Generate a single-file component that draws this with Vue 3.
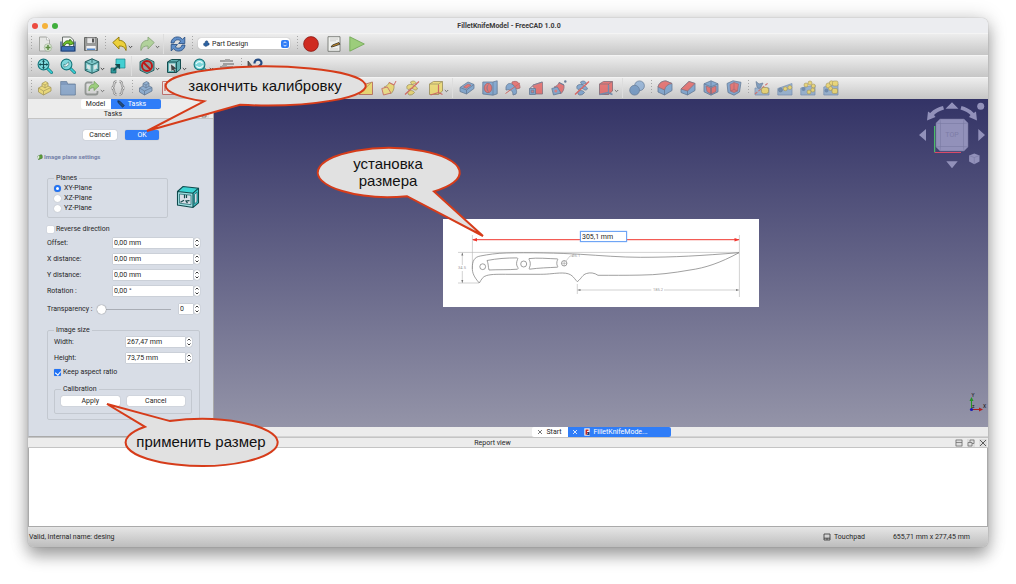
<script setup>
import { ref } from 'vue'

const fileTools = [
  { k: 'handle' }, { k: 'b', i: 'new', t: 'New' }, { k: 'b', i: 'open', t: 'Open' }, { k: 'b', i: 'save', t: 'Save' },
  { k: 'handle' }, { k: 'b', i: 'undo', t: 'Undo', m: true }, { k: 'b', i: 'redo', t: 'Redo', m: true, dim: true },
  { k: 'sep' }, { k: 'b', i: 'refresh', t: 'Refresh' }, { k: 'handle' }, { k: 'combo' }, { k: 'handle' },
  { k: 'b', i: 'record', t: 'Record macro' }, { k: 'b', i: 'macro', t: 'Macros' }, { k: 'b', i: 'play', t: 'Run macro' }
]
const viewTools = [
  { k: 'handle' }, { k: 'b', i: 'fit', t: 'Fit all' }, { k: 'b', i: 'fitsel', t: 'Fit selection' },
  { k: 'b', i: 'iso', t: 'Isometric', m: true }, { k: 'b', i: 'golink', t: 'Go to linked object' }, { k: 'sep' },
  { k: 'b', i: 'nodraw', t: 'Draw style', m: true }, { k: 'b', i: 'selbox', t: 'Bounding box', m: true },
  { k: 'b', i: 'lens', t: 'Zoom', m: true }, { k: 'b', i: 'measure', t: 'Measure', dim: true },
  { k: 'handle' }, { k: 'b', i: 'whats', t: "What's this?" }
]
const partTools = [
  { k: 'handle' }, { k: 'b', i: 'ybody', t: 'Part' }, { k: 'b', i: 'folder', t: 'Group' },
  { k: 'b', i: 'share', t: 'Link', m: true }, { k: 'b', i: 'braces', t: 'Variables' }, { k: 'handle' },
  { k: 'b', i: 'bbody', t: 'Body' }, { k: 'b', i: 'sketch', t: 'Sketch' }, { k: 'space' },
  { k: 'b', i: 'yloft', t: 'Loft' }, { k: 'b', i: 'ysweep', t: 'Pipe' }, { k: 'b', i: 'yhelix', t: 'Helix' },
  { k: 'b', i: 'ycube', t: 'Primitive', m: true }, { k: 'sep' },
  { k: 'b', i: 'pocket', t: 'Pocket' }, { k: 'b', i: 'hole', t: 'Hole' }, { k: 'b', i: 'groove', t: 'Groove' },
  { k: 'b', i: 'rloft', t: 'Subtractive loft' }, { k: 'b', i: 'rsweep', t: 'Subtractive pipe' },
  { k: 'b', i: 'rhelix', t: 'Subtractive helix' }, { k: 'b', i: 'rcube', t: 'Subtractive primitive', m: true },
  { k: 'sep' }, { k: 'b', i: 'boolean', t: 'Boolean' }, { k: 'handle' },
  { k: 'b', i: 'fillet', t: 'Fillet' }, { k: 'b', i: 'chamfer', t: 'Chamfer' }, { k: 'b', i: 'draft', t: 'Draft' },
  { k: 'b', i: 'thick', t: 'Thickness' }, { k: 'handle' },
  { k: 'b', i: 'mirror', t: 'Mirrored' }, { k: 'b', i: 'linear', t: 'Linear pattern' },
  { k: 'b', i: 'polar', t: 'Polar pattern' }, { k: 'b', i: 'multi', t: 'MultiTransform' }
]
const bars = [
  { name: 'File', items: fileTools },
  { name: 'View', items: viewTools },
  { name: 'Part Design', items: partTools, faded: true }
]

const planes = ['XY-Plane', 'XZ-Plane', 'YZ-Plane']
const plane = ref('XY-Plane')
const reverse = ref(false)
const keep = ref(true)
const transparency = ref(0)
const placement = ref([
  { id: 'offset', label: 'Offset:', value: '0,00 mm' },
  { id: 'xdist', label: 'X distance:', value: '0,00 mm' },
  { id: 'ydist', label: 'Y distance:', value: '0,00 mm' },
  { id: 'rotation', label: 'Rotation :', value: '0,00 °' }
])
const sizes = ref([
  { id: 'width', label: 'Width:', value: '267,47 mm' },
  { id: 'height', label: 'Height:', value: '73,75 mm' }
])
const measured = ref('305,1 mm')
</script>

<template>
  <div class="desktop">
    <svg class="defs" aria-hidden="true">
      <defs>
        <symbol id="new" viewBox="0 0 16 16"><path d="M2.5 1h7l3 3v11h-10z" fill="#e6e7e5" stroke="#a4a6a2" /><path d="M9.5 1v3h3" fill="#fff" stroke="#a4a6a2" stroke-width=".6" /><circle cx="11" cy="11.500" r="3.800" fill="#d9e6d2" stroke="#9bac92" stroke-width=".6" /><path d="M11 9v5M8.500 11.500h5" stroke="#5d8d43" stroke-width="1.500" /></symbol>
        <symbol id="open" viewBox="0 0 16 16"><path d="M2.500 1h8l3 3v8h-11z" fill="#f4f5f3" stroke="#49504c" stroke-width=".8" /><path d="M1 5.500v9.500h14V5.500" fill="none" stroke="#244a84" stroke-width="1.200" /><path d="M1.500 10.500h13v4.500h-13z" fill="#3c6eb4" stroke="#1d3e72" stroke-width=".8" /><path d="M3 9.500c.5-4 4-5.500 6.500-4.500l.4-1.800 4 4.300-4.800 1.800.2-1.800c-2-.6-4 .2-4.500 2z" fill="#70c22a" stroke="#24600b" stroke-width=".8" /></symbol>
        <symbol id="save" viewBox="0 0 16 16"><path d="M1.500 1.500h12l1 1v12h-13z" fill="#999b99" stroke="#676967" /><path d="M4 1.800h8v5.700H4z" fill="#e7e7e7" stroke="#777" stroke-width=".5" /><path d="M9 2.500h2v4H9z" fill="#555" /><path d="M3 9.500h10v5H3z" fill="#f1f1f1" stroke="#777" stroke-width=".5" /><path d="M4 12.500h8v1.500H4z" fill="#5086ca" /></symbol>
        <symbol id="undo" viewBox="0 0 16 16"><path d="M.8 6.500 7 1v3.300c5 0 8 3.700 7 10.200-1-3.200-3.300-4.700-7-4.500v3z" fill="#ecd03b" stroke="#8b7507" stroke-width=".9" stroke-linejoin="round" /></symbol>
        <symbol id="redo" viewBox="0 0 16 16"><path d="M15.200 6.500 9 1v3.300c-5 0-8 3.700-7 10.200 1-3.200 3.300-4.700 7-4.500v3z" fill="#a7d08c" stroke="#789b65" stroke-width=".9" stroke-linejoin="round" /></symbol>
        <symbol id="refresh" viewBox="0 0 16 16"><path d="M1 7c.3-6.500 8.500-8 11.500-3.600L14.800 1v6.500H8.600L10.700 5C8 2.700 4.500 4 4 7z" fill="#608fc9" stroke="#234a7d" stroke-width=".8" /><path d="M15 9c-.3 6.500-8.500 8-11.500 3.600L1.200 15V8.500h6.200L5.300 11c2.700 2.300 6.200 1 6.700-2z" fill="#608fc9" stroke="#234a7d" stroke-width=".8" /></symbol>
        <symbol id="record" viewBox="0 0 16 16"><circle cx="8" cy="8" r="7.400" fill="#cf2b20" stroke="#811611" stroke-width=".7" /></symbol>
        <symbol id="macro" viewBox="0 0 16 16"><path d="M2 .7h12v14.600H2z" fill="#eff0ed" stroke="#676a65" stroke-width=".8" /><path d="M4 3h8M4 4.800h6M4 13h8" stroke="#b9bbb8" stroke-width=".6" /><path d="m5 11 1.500-2L13 6.500l.8 1.800L7 10.700z" fill="#c58c2a" stroke="#2e2c27" stroke-width=".8" /></symbol>
        <symbol id="play" viewBox="0 0 16 16"><path d="M.8.8 15.300 8 .8 15.200z" fill="#9ccd7b" stroke="#6fa553" stroke-width=".8" /></symbol>

        <symbol id="glass" viewBox="0 0 16 16"><path d="m10 10 4.500 4.500" stroke="#16777c" stroke-width="3" stroke-linecap="round" /><path d="m10 10 4.500 4.500" stroke="#38d3d8" stroke-width="1.700" stroke-linecap="round" /><circle cx="6.500" cy="6.500" r="5.400" fill="#7dd6da" stroke="#16777c" stroke-width="1.100" /></symbol>
        <symbol id="fit" viewBox="0 0 16 16"><use href="#glass" /><path d="M6.500 2.500v8M2.500 6.500h8" stroke="#174f54" stroke-width="1.100" /><path d="m6.500 1.700 1.500 2H5zM6.500 11.300l1.500-2H5zM1.700 6.500l2 1.500V5zM11.300 6.500l-2 1.500V5z" fill="#174f54" /></symbol>
        <symbol id="fitsel" viewBox="0 0 16 16"><use href="#glass" /><path d="M4 9V6l1.200 1L8.500 4 9 6.500 6.500 8.500z" fill="#e7f7f7" stroke="#235a5e" stroke-width=".5" /></symbol>
        <symbol id="iso" viewBox="0 0 16 16"><path d="m8 .8 6.800 3v8.600L8 15.300l-6.800-2.900V3.800z" fill="#7fc9cb" stroke="#1f5c5e" stroke-width="1" /><path d="m1.200 3.800 6.800 3 6.800-3M8 6.800v8.500M8 .8v4M1.200 12.400 6 9.500m8.800 2.900L10 9.500" fill="none" stroke="#1f5c5e" stroke-width=".8" /><path d="M3 6.200 6.300 7.800v4L3 10.500zM13 6.200 9.700 7.800v4l3.300-1.300z" fill="#d9e5e5" /></symbol>
        <symbol id="golink" viewBox="0 0 16 16"><path d="M6 1h9v9H6z" fill="#44cfd2" stroke="#188386" stroke-width=".7" /><path d="M1 10h5v5H1z" fill="#2c9699" stroke="#14585a" stroke-width=".7" /><path d="m3.500 12.500 5-5M6.200 6.500h3.300v3.300z" fill="#16484a" stroke="#16484a" stroke-width="1.200" /></symbol>
        <symbol id="nodraw" viewBox="0 0 16 16"><path d="m8 .5 7 3.200v8.600l-7 3.200-7-3.200V3.700z" fill="#5fb0b2" stroke="#154d4f" stroke-width=".8" /><circle cx="8" cy="8" r="5" fill="#8d9a97" stroke="#c01818" stroke-width="2" /><path d="m4.500 4.500 7 7" stroke="#c01818" stroke-width="2" /></symbol>
        <symbol id="selbox" viewBox="0 0 16 16"><path d="m1.500 4 4-2.500h9v9.500l-4 3.500h-9z" fill="#5fb0b2" stroke="#154d4f" stroke-width="1" /><path d="M1.500 4h9v10.500M10.500 4l4-2.500" fill="none" stroke="#154d4f" stroke-width=".9" /><path d="M3 5.500h6V13H3z" fill="#cfdfdf" /><path d="m5 6.500 5.500 4-2.200.6 1.200 2.400-1.200.6-1.200-2.400L5.500 13z" fill="#444" /></symbol>
        <symbol id="lens" viewBox="0 0 16 16"><use href="#glass" /><path d="M3 6c1.500-3 5-3 6.500-.7M10 7.500c-1.500 2.800-5 2.800-6.500.5" fill="none" stroke="#eefbfb" stroke-width="1.300" /></symbol>
        <symbol id="measure" viewBox="0 0 16 16"><path d="M1 3h13M4 6h11M1 9h13" stroke="#777" stroke-width="1.500" /><path d="M6 1h5v3H6zM3 7h5v3H3z" fill="#999" /></symbol>
        <symbol id="whats" viewBox="0 0 16 16"><path d="M1 3v11l8-1z" fill="#656565" stroke="#333" stroke-width=".7" /><path d="M7.500 5.500c0-5 7-5 7-.5 0 3-3.500 2-3.500 5" fill="none" stroke="#254c84" stroke-width="2.200" /></symbol>

        <symbol id="ybody" viewBox="0 0 16 16"><path d="m1.500 8 3.500-2V3.500L8.500 1.500 11 3v3l3 1.500v3.500L6.500 15l-5-3z" fill="#f2d951" stroke="#8b7922" stroke-width=".8" /><path d="m1.500 8 5 3v4M6.500 11 14 7.500M5 6l3 2 3-2M5 3.500 8 5v3M8 5l3-2" fill="none" stroke="#8b7922" stroke-width=".7" /></symbol>
        <symbol id="bbody" viewBox="0 0 16 16"><path d="m1.500 8 3.500-2V3.500L8.500 1.500 11 3v3l3 1.500v3.500L6.500 15l-5-3z" fill="#6d9acb" stroke="#2c4b70" stroke-width=".8" /><path d="m1.500 8 5 3v4M6.500 11 14 7.500M5 6l3 2 3-2M5 3.500 8 5v3M8 5l3-2" fill="none" stroke="#2c4b70" stroke-width=".7" /></symbol>
        <symbol id="folder" viewBox="0 0 16 16"><path d="M.7 1.500h6l1 2.500h7.600v11H.7z" fill="#5379ad" stroke="#34557f" stroke-width=".8" /><path d="M1.200 5h13.600v9.500H1.200z" fill="#6d94c4" /></symbol>
        <symbol id="share" viewBox="0 0 16 16"><path d="M8.500 2.500h-5a2 2 0 0 0-2 2v8a2 2 0 0 0 2 2h8a2 2 0 0 0 2-2v-1.500" fill="none" stroke="#747a76" stroke-width="1.800" /><path d="M5 11c-.5-5 2-7 5-6.800V1.300L15 6l-5 4.500V7.800c-2.500-.3-4.300.7-5 3.200z" fill="#7dc650" stroke="#417a1f" stroke-width=".7" /></symbol>
        <symbol id="braces" viewBox="0 0 16 16"><path d="M6.500 1.500C2 1.500 6 7 1.800 8 6 9 2 14.500 6.500 14.500M9.500 1.500c4.500 0 .5 5.500 4.700 6.500-4.200 1-.2 6.500-4.700 6.500" fill="none" stroke="#606060" stroke-width="2.400" /><path d="M6.500 1.500C2 1.500 6 7 1.800 8 6 9 2 14.500 6.500 14.500M9.500 1.500c4.500 0 .5 5.500 4.700 6.500-4.200 1-.2 6.500-4.700 6.500" fill="none" stroke="#f0f0f0" stroke-width="1" /></symbol>
        <symbol id="sketch" viewBox="0 0 16 16"><path d="M1.500 1.500h13v13h-13z" fill="#f1e8e5" stroke="#b24440" /><path d="M4 11V4h6" fill="none" stroke="#c3322d" stroke-width="1.300" /></symbol>
        <symbol id="yloft" viewBox="0 0 16 16"><path d="M1 6l13.500-4v12.500H1z" fill="#efd445" stroke="#ad4b32" /><path d="m1 14 13-12" stroke="#a88a1d" /></symbol>
        <symbol id="ysweep" viewBox="0 0 16 16"><path d="M3 7c3-1 4-2 5-4.500L13 5c.5 4-1 7-3.500 9z" fill="#edd34a" stroke="#85742c" stroke-width=".8" /><path d="m.8 8.500 5.500-1.500L10 13l-7.500 2z" fill="#f0dc66" stroke="#c04c3b" stroke-width="1" /><path d="m8 2.500 5 2.500 2-4" fill="none" stroke="#c93731" stroke-width="1" /></symbol>
        <symbol id="yhelix" viewBox="0 0 16 16"><g fill="#e9d14d" stroke="#85752b" stroke-width=".8"><path d="M6.500 2c3-2 6-.5 6 2.500-1-1-3.500-1-4.500.5z" /><path d="M3 6c2-3 9-1.500 10.500 3-1 1-2 1.200-3 1C9.500 8 6 8 5 9.500 3 9.500 2.500 8 3 6z" /><path d="M3.500 12c2-2.500 6-1.500 7 .5-1.500 2.500-5 3-6 2z" /></g><path d="M1 14.500 15 1.500" stroke="#cc3530" stroke-width="1.100" /></symbol>
        <symbol id="ycube" viewBox="0 0 16 16"><path d="m1.500 4 4-2.500h9V11L10.500 14.500h-9z" fill="#f0d84f" stroke="#85742c" stroke-width=".9" /><path d="M1.500 4h9v10.500M10.500 4l4-2.500" fill="none" stroke="#85742c" stroke-width=".8" /><path d="M10.500 5v7.500l4 2M10.500 12.500l-8 2.500" fill="none" stroke="#c93731" stroke-width="1.200" /></symbol>
        <symbol id="pocket" viewBox="0 0 16 16"><path d="m1 7.500 8-5.500 6 2.500v4L7.500 14 1 11.500z" fill="#5d90c8" stroke="#304f76" stroke-width=".8" /><path d="M1 7.500 7.500 10 15 4.500M7.500 10v4" fill="none" stroke="#304f76" stroke-width=".8" /><path d="m4.500 7 4.500-3 3 1.200L7.500 8.300z" fill="#e44847" stroke="#8b3032" stroke-width=".6" /></symbol>
        <symbol id="hole" viewBox="0 0 16 16"><path d="M.8 2h10l4.400-1.200v13L11 15.200.8 14z" fill="#5d90c8" stroke="#304f76" stroke-width=".8" /><path d="M11 2v13" stroke="#304f76" stroke-width=".7" /><ellipse cx="6" cy="8" rx="3.800" ry="4.700" fill="#e44847" stroke="#8b3032" stroke-width=".8" /><path d="M6.500 4.500c-2 2-2 5 0 7" stroke="#304f76" stroke-width=".8" fill="none" /></symbol>
        <symbol id="groove" viewBox="0 0 16 16"><path d="M7 2c5-2 8 1 8 6l-3.500 1C10 6 9 5 7 5z" fill="#e44847" stroke="#8b3032" stroke-width=".8" /><path d="M1 7c1-4 5-5 8-1s3 6 2 8l-3 1C8 11 6 9 1 10z" fill="#5d90c8" stroke="#304f76" stroke-width=".8" /><path d="M.5 13.500 15 3" stroke="#c93731" stroke-width="1" /></symbol>
        <symbol id="rloft" viewBox="0 0 16 16"><path d="M5 5 14.500 2v12L8 14z" fill="#e44847" stroke="#5e4358" stroke-width=".8" /><path d="M1.500 8.500h6v6h-6z" fill="#5d90c8" stroke="#304f76" stroke-width=".8" /><path d="m1.500 8.500 4-3.500L14 2M3.200 10.200h2.600v2.600H3.200z" fill="#cf5a5f" stroke="#304f76" stroke-width=".7" /></symbol>
        <symbol id="rsweep" viewBox="0 0 16 16"><path d="M3 7c3-1 4-2 5-4.500L13 5c.5 4-1 7-3.500 9z" fill="#e44847" stroke="#63435a" stroke-width=".8" /><path d="m.8 8.500 5.500-1.500L10 13l-7.500 2z" fill="#5d90c8" stroke="#304f76" stroke-width=".8" /><path d="m8 2.500 5 2.500" stroke="#304f76" /><circle cx="4.800" cy="11" r="1.500" fill="#d5585c" /><circle cx="14.300" cy="1.500" r="1.200" fill="#304f76" /></symbol>
        <symbol id="rhelix" viewBox="0 0 16 16"><g fill="#5d90c8" stroke="#304f76" stroke-width=".8"><path d="M6.500 2c3-2 6-.5 6 2.500-1-1-3.500-1-4.500.5z" /><path d="M3 6c2-3 9-1.500 10.500 3-1 1-2 1.200-3 1C9.500 8 6 8 5 9.500 3 9.500 2.500 8 3 6z" /><path d="M3.500 12c2-2.500 6-1.500 7 .5-1.500 2.500-5 3-6 2z" /></g><path d="M1 14.500 15 1.500" stroke="#d9302c" stroke-width="1.300" /></symbol>
        <symbol id="rcube" viewBox="0 0 16 16"><path d="m1.500 4 4-2.500h9V11L10.500 14.500h-9z" fill="#e44847" stroke="#65404f" stroke-width=".9" /><path d="M1.500 4h9v10.500M10.500 4l4-2.500" fill="none" stroke="#65404f" stroke-width=".8" /><path d="M10.500 5v8l4 1.500M10.500 12.500l-9 2" fill="none" stroke="#41699b" stroke-width="1.400" /></symbol>
        <symbol id="boolean" viewBox="0 0 16 16"><circle cx="10.500" cy="5.800" r="4.900" fill="#7ba3d1" stroke="#304f76" stroke-width=".7" /><circle cx="5.600" cy="10.200" r="4.900" fill="#4f80b9" stroke="#304f76" stroke-width=".7" /></symbol>
        <symbol id="fillet" viewBox="0 0 16 16"><path d="M1 7c1-4 4-6 8-6l6 2.500v7L7.500 15 1 12z" fill="#5d90c8" stroke="#304f76" stroke-width=".8" /><path d="M1 7c1-4 4-6 8-6l6 2.500C11 4 8.500 6 7.500 10z" fill="#e44847" stroke="#65404f" stroke-width=".8" /><path d="M7.500 10v5" stroke="#304f76" stroke-width=".8" /></symbol>
        <symbol id="chamfer" viewBox="0 0 16 16"><path d="M1 9 9 1.500l6 2v7L7.500 15 1 12.500z" fill="#5d90c8" stroke="#304f76" stroke-width=".8" /><path d="M1 9 9 1.500l6 2L7.500 11z" fill="#e44847" stroke="#65404f" stroke-width=".8" /><path d="M7.500 11v4" stroke="#304f76" stroke-width=".8" /></symbol>
        <symbol id="draft" viewBox="0 0 16 16"><path d="m8 .8 7 3v8L8 15.200l-7-3.400v-8z" fill="#5d90c8" stroke="#304f76" stroke-width=".8" /><path d="M3 6 8 8v6l-4-2.500zM13 6 8 8v6l5-2.500z" fill="#e44847" stroke="#7d3b48" stroke-width=".7" /><path d="m1 3.800 7 3 7-3M8 .8v14" fill="none" stroke="#304f76" stroke-width=".8" /></symbol>
        <symbol id="thick" viewBox="0 0 16 16"><path d="m1 3.500 6-2.700 8 1.500L13.500 12 8 15.200 2 12.500z" fill="#5d90c8" stroke="#304f76" stroke-width=".8" /><path d="M4 4.500 8 2.500l4.500 1.500-1 7L8 12.500 4.500 11z" fill="#e44847" stroke="#843745" stroke-width=".7" /><path d="M8 2.500v7l3.500 1.500M8 9.500 4.500 11" fill="none" stroke="#843745" stroke-width=".7" /></symbol>
        <symbol id="mirror" viewBox="0 0 16 16"><path d="M1 8h14v7H1z" fill="#88a7ca" stroke="#4a6f9d" stroke-width=".7" /><path d="m2 1.500 3 2.500 4-1-2 4-2 1.500L3 7z" fill="#5681b2" stroke="#304f76" stroke-width=".7" /><path d="m1 14 13-11" stroke="#cc4943" stroke-width="1.200" stroke-dasharray="3 1.500" /><rect x="7.500" y="7.500" width="7" height="6" rx="2" fill="#ebcf4a" stroke="#857229" stroke-width=".7" /></symbol>
        <symbol id="linear" viewBox="0 0 16 16"><path d="M.8 8.500 15 3.500V15H.8z" fill="#7b9fc8" stroke="#4a6f9d" stroke-width=".7" /><circle cx="3.500" cy="10" r="2" fill="#41699b" stroke="#304f76" stroke-width=".6" /><circle cx="8.300" cy="8.800" r="2" fill="#ebcf4a" stroke="#857229" stroke-width=".6" /><circle cx="12.800" cy="7.500" r="2" fill="#ebcf4a" stroke="#857229" stroke-width=".6" /></symbol>
        <symbol id="polar" viewBox="0 0 16 16"><path d="M.8 8 15 5v10H.8z" fill="#7b9fc8" stroke="#4a6f9d" stroke-width=".7" /><circle cx="3.500" cy="9" r="2" fill="#41699b" /><g fill="#ebcf4a" stroke="#857229" stroke-width=".6"><circle cx="6" cy="5" r="2" /><circle cx="10" cy="3" r="2" /><circle cx="13.300" cy="6" r="2" /><circle cx="12.800" cy="10" r="2" /><circle cx="9" cy="12" r="2" /></g></symbol>
        <symbol id="multi" viewBox="0 0 16 16"><path d="M.8 7 15 4v11H.8z" fill="#7b9fc8" stroke="#4a6f9d" stroke-width=".7" /><circle cx="3.500" cy="10.500" r="2" fill="#41699b" /><g fill="#ebcf4a" stroke="#857229" stroke-width=".6"><circle cx="5.500" cy="5.500" r="2.600" /><circle cx="8.500" cy="3" r="2.200" /><rect x="9.500" y="1" width="5.500" height="5" rx="1.500" /><circle cx="7.500" cy="8.500" r="2" /><rect x="9" y="8.500" width="5.500" height="5" rx="1.500" /></g></symbol>
      </defs>
    </svg>

    <div class="window">
      <header class="titlebar">
        <div class="lights">
          <button class="light red" aria-label="Close"></button>
          <button class="light amber" aria-label="Minimize"></button>
          <button class="light green" aria-label="Zoom"></button>
        </div>
        <h1>FilletKnifeModel - FreeCAD 1.0.0</h1>
      </header>

      <div v-for="bar in bars" :key="bar.name" class="toolbar" :class="{ faded: bar.faded }" role="toolbar" :aria-label="bar.name">
        <template v-for="(item, n) in bar.items" :key="n">
          <span v-if="item.k === 'handle'" class="handle"></span>
          <span v-else-if="item.k === 'sep'" class="sep"></span>
          <span v-else-if="item.k === 'space'" class="space"></span>
          <div v-else-if="item.k === 'combo'" class="combo">
            <svg class="combo-icon" viewBox="0 0 16 16"><path d="m1.500 8 3.500-2V3.500L8.500 1.500 11 3v3l3 1.500v3.500L6.500 15l-5-3z" fill="#2c62a2" stroke="#173660" /></svg>
            <select aria-label="Workbench"><option>Part Design</option></select>
            <svg class="combo-arrows" viewBox="0 0 8 8"><path d="M2.500 3.200 4 1.700l1.500 1.500M2.500 4.800 4 6.300l1.500-1.500" fill="none" stroke="#fff" stroke-width=".9" /></svg>
          </div>
          <button v-else class="tool" :class="{ menu: item.m, dim: item.dim }" :aria-label="item.t">
            <svg class="icon"><use :href="'#' + item.i" /></svg>
            <svg v-if="item.m" class="chev" viewBox="0 0 5 4"><path d="m.8 1 1.700 1.700L4.200 1" fill="none" stroke="#333" stroke-width=".9" /></svg>
          </button>
        </template>
      </div>

      <div class="middle">
        <aside class="dock">
          <div class="tabs">
            <button class="tab model">Model</button>
            <button class="tab tasks active">
              <svg viewBox="0 0 10 10"><path d="m1 1 2.500.5L9 7 7 9 1.500 3.500z" fill="#27507a" stroke="#152c4b" /></svg>Tasks
            </button>
          </div>
          <div class="dock-title">
            <span>Tasks</span>
            <button aria-label="Float"><svg viewBox="0 0 8 8"><path d="M1 3.500h4v3.500H1zM3 3.500V1h4v3.500H5" /></svg></button>
          </div>
          <form class="panel" @submit.prevent>
            <div class="dialog-buttons">
              <button type="button" class="push">Cancel</button>
              <button type="submit" class="push primary">OK</button>
            </div>
            <h2>
              <svg viewBox="0 0 8 8"><path d="M1 3 5.500.8 7 2v3.500L2 7.500z" fill="#5c9f3a" stroke="#35611f" stroke-width=".6" /><path d="m1 3 2-.8v3.500l-2 1z" fill="#e4ecdf" /></svg>
              Image plane settings
            </h2>
            <div class="plane-row">
              <fieldset class="planes">
                <legend>Planes</legend>
                <label v-for="p in planes" :key="p"><input v-model="plane" type="radio" name="plane" :value="p" />{{ p }}</label>
              </fieldset>
              <svg class="plane-icon" viewBox="0 0 24 24">
                <path d="M1.500 6.500 7 1.500l15.500 1.700-5.500 5z" fill="#3dd3d3" />
                <path d="M17 8.200 22.500 3.200v14.600L17 22.500z" fill="#3dc5c8" />
                <path d="M1.500 6.500 17 8.200v14.300L1.500 20z" fill="#9fdfe2" />
                <path d="M3.500 9 15 10.200v9.500L3.500 18.200zM18.500 9.500 21 7.200v9.500l-2.500 2.200z" fill="#d8dde6" stroke="#126064" stroke-width=".7" />
                <path d="M1.500 6.500 7 1.500l15.500 1.700v14.600L17 22.500 1.500 20zM1.500 6.500 17 8.200v14.300M17 8.200l5.500-5" fill="none" stroke="#0f4a4d" stroke-width="1.100" />
                <path d="M8.500 9.800v3.500m2-3.300v3M4.500 17.200l3.500-2m3.500 3-1.500-2.200 3.500-.3" fill="none" stroke="#16494c" stroke-width="1.200" />
              </svg>
            </div>
            <label class="check reverse"><input v-model="reverse" type="checkbox" />Reverse direction</label>
            <div v-for="f in placement" :key="f.id" class="field">
              <label :for="f.id">{{ f.label }}</label>
              <input :id="f.id" v-model="f.value" type="text" />
              <button type="button" class="spin" :aria-label="'Step ' + f.label"><svg viewBox="0 0 6 10"><path d="M1.500 3.500 3 2l1.500 1.500M1.500 6.500 3 8l1.500-1.500" /></svg></button>
            </div>
            <div class="field transparency">
              <label for="transparency">Transparency :</label>
              <input id="transparency" v-model="transparency" type="range" min="0" max="100" />
              <input v-model="transparency" class="amount" type="text" aria-label="Transparency value" />
              <button type="button" class="spin" aria-label="Step transparency"><svg viewBox="0 0 6 10"><path d="M1.500 3.500 3 2l1.500 1.500M1.500 6.500 3 8l1.500-1.500" /></svg></button>
            </div>
            <fieldset class="size">
              <legend>Image size</legend>
              <div v-for="f in sizes" :key="f.id" class="field">
                <label :for="f.id">{{ f.label }}</label>
                <input :id="f.id" v-model="f.value" type="text" />
                <button type="button" class="spin" :aria-label="'Step ' + f.label"><svg viewBox="0 0 6 10"><path d="M1.500 3.500 3 2l1.500 1.500M1.500 6.500 3 8l1.500-1.500" /></svg></button>
              </div>
              <label class="check"><input v-model="keep" type="checkbox" />Keep aspect ratio</label>
              <fieldset class="calibration">
                <legend>Calibration</legend>
                <button type="button" class="push">Apply</button>
                <button type="button" class="push">Cancel</button>
              </fieldset>
            </fieldset>
          </form>
        </aside>

        <main class="work">
          <div class="view">
            <div class="drawing">
              <svg viewBox="0 0 316 88">
                <g fill="none" stroke="#b4b4b4" stroke-width=".6">
                  <path d="M15 33.400H296M15 64h21M19.300 34v12M19.300 52v12M29.400 16v34M296.400 16v62M134.300 65v10M134.300 71h74M221 71h75M123 42l4-5h3" />
                </g>
                <g fill="none" stroke="#777" stroke-width=".7">
                  <path d="M36.300 64C31 58 29.300 54 29.300 49c0-7 2-11 8-12 8-1.500 16-2.800 26-3 20-.6 54 0 74 1.300 20 1.200 40 3 60 3 35 0 60-1.600 98.700-4.600C277 44 262 49 247 51c-17 3-33 5-50 5.100-15 .3-28 .2-42 .2-3.500-2.500-8-3-11.500-1.800-4.500 1.500-4 4-9.200 8.200-4-4-5-8.700-15-8.700-8 0-12 1.300-22 1.300H66c-10 0-17-.3-22.300 1.200C39.500 57.500 38.500 60.500 36.300 64z" />
                  <path d="M44 41.500c1.500 3 1 6 2 9.500 9-.5 19 0 28.500-.8 1-.5.500-1.700 0-2.200-1.500-2.500-1-5 0-7.500.5-1 .3-1.500-.5-1.600-10 0-20 .6-30 2.600zM86 39.600c8-1 19 0 28.500.3.800.8-.8 1.500-.7 4.500 0 2.500 1.500 3 .7 3.800-9 .5-19 .7-28 2-1-1 1-2.500.8-5.500 0-3-1.500-3.500-1.300-5.100z" />
                  <circle cx="39.700" cy="47.700" r="2.900" /><circle cx="80.700" cy="45" r="3" /><circle cx="121.200" cy="44.300" r="2.700" />
                  <path d="M118.500 44.300h5.400M121.200 41.600V47" stroke-width=".4" />
                </g>
                <path d="m19.300 33.500 1 3h-2zM19.300 64l1-3h-2zM134.500 71l3-1v2zM296 71l-3-1v2z" fill="#777" />
                <g class="dim-text"><text x="19" y="50">34.5</text><text x="133" y="38">Ø5.1</text><text x="215" y="72">185.2</text></g>
                <path d="M30 20.700H296" stroke="#f0352e" stroke-width="1" /><path d="m29 20.700 5-1.800v3.600zM296.500 20.700l-5-1.800v3.600z" fill="#f0352e" />
              </svg>
              <input v-model="measured" class="measured" type="text" aria-label="Distance" />
            </div>
            <svg class="navcube" viewBox="0 0 70 71">
              <g fill="#9291ba">
                <path d="m1 36 7-6v12zM34 3.300l6.500 6.500h-13zM67 36l-6.700-6v12zM34 69.300l-5.700-7h11.400z" />
                <path d="m25 7 1 3.500c-5 1.500-8 3.500-10 5.500l1.500 2L9 21.500l1-9 2.200 1.500c4-4 8-6 12.800-7zM43.500 7l-1 3.500c5 1.500 8 3.500 10 5.500L51 18l8 3.500-1-9-2.200 1.500c-4-4-8-6-12.300-7z" />
                <circle cx="62.700" cy="7.300" r="3.500" />
                <path d="m56.300 54.500 5.200 2v6l-5.200 2.700-5.200-2.700v-6z" />
                <path d="M22 20h24l4 4v24l-4 4H22l-4-4V24z" />
              </g>
              <path d="M22 20h24l4 4v24l-4 4H22l-4-4V24zM22.500 24.500h23v23h-23zM22.500 24.500 18 24m4.500.5-.5-4.500M45.500 24.500 46 20m-.5 4.500 4.500-.5M45.500 47.500l.5 4.500m-.5-4.500 4.500.5M22.500 47.500 22 52m.5-4.500L18 48M51 56.500l5.300 2 5.300-2M56.300 58.500v6.500" fill="none" stroke="#75749f" stroke-width=".5" />
              <text x="34" y="38">TOP</text>
              <path d="M16.700 27v26.300" stroke="#4fd968" /><path d="M16.700 53.500H43" stroke="#d94a68" />
            </svg>
            <svg class="axis" viewBox="0 0 22 22">
              <path d="M5.500 16.500V7" stroke="#269426" /><path d="m5.500 4 2 4h-4z" fill="#269426" />
              <path d="M5.500 16.500H13" stroke="#a22" /><path d="m17 16.500-4-2v4z" fill="#b22020" />
              <circle cx="5.500" cy="16.500" r="1.600" fill="#1b1bb5" />
              <text x="5.500" y="4">Y</text><text x="17" y="15">X</text><text x="6" y="15">z</text>
            </svg>
          </div>
          <nav class="tabs doc-tabs">
            <button class="tab start"><svg viewBox="0 0 6 6"><path d="m1 1 4 4M5 1 1 5" stroke="#555" stroke-width=".8" /></svg>Start</button>
            <button class="tab doc active">
              <svg viewBox="0 0 6 6"><path d="m1 1 4 4M5 1 1 5" stroke="#fff" stroke-width=".8" /></svg>
              <svg class="doc-icon" viewBox="0 0 6 8"><path d="M.3.300h5.400v7.400H.3z" fill="#f2f2f2" /><path d="M1.500 1.500h3v1.500H3v1h1v1H3v1.800H1.500z" fill="#c22b25" /><path d="M4 4h1.500v3H3z" fill="#223c77" /></svg>
              FilletKnifeMode...
            </button>
          </nav>
        </main>
      </div>

      <section class="report">
        <div class="report-title">
          <span>Report view</span>
          <button aria-label="Collapse"><svg viewBox="0 0 8 8"><path d="M1 1h6v6H1zM1 3.500h6" /></svg></button>
          <button aria-label="Float"><svg viewBox="0 0 8 8"><path d="M1 3.500h4v3.500H1zM3 3.500V1h4v3.500H5" /></svg></button>
          <button class="close" aria-label="Close"><svg viewBox="0 0 8 8"><path d="m1 1 6 6M7 1 1 7" /></svg></button>
        </div>
        <div class="report-body"></div>
      </section>

      <footer class="status">
        <span class="message">Valid, Internal name: desing</span>
        <button class="nav-style"><svg viewBox="0 0 8 8"><path d="M1 1h6v6H1zM1 5.200h6M4 5.200V7" fill="none" stroke="#333" stroke-width=".8" /></svg>Touchpad</button>
        <span class="extent">655,71 mm x 277,45 mm</span>
      </footer>
    </div>

    <svg class="callout finish" viewBox="140 60 232 78">
      <path d="M204 101.300A100 19.500 0 1 1 240 104.800L147 131z" />
      <text x="265" y="91">закончить калибровку</text>
    </svg>
    <svg class="callout measure" viewBox="310 140 180 102">
      <path d="M434 191.400A71 24.500 0 1 0 407 196.200L483 236z" />
      <text x="388" y="169">установка</text><text x="388" y="186">размера</text>
    </svg>
    <svg class="callout apply" viewBox="100 398 184 76">
      <path d="M170 421.100A76 23.500 0 1 1 145 426.800L107 404z" />
      <text x="201" y="447">применить размер</text>
    </svg>
  </div>
</template>

<style>
body { margin: 0; background: #fff; }
</style>

<style scoped>
* { box-sizing: border-box; }
.desktop {
  position: relative;
  display: flex;
  min-height: 100vh;
  padding: 18px 28px 37px;
  overflow: hidden;
  font: 7px/10px Roboto, "Liberation Sans", sans-serif;
  color: #262626;
}
button, input, select { margin: 0; padding: 0; border: 0; font: inherit; color: inherit; background: none; }
svg { display: block; flex: none; }
.defs { position: absolute; width: 0; height: 0; }
.window {
  flex: 1;
  min-width: 0;
  display: flex;
  flex-direction: column;
  border-radius: 6px;
  overflow: hidden;
  background: #ebebeb;
  box-shadow: 0 9px 16px rgba(0, 0, 0, .32), 0 0 20px rgba(0, 0, 0, .18), 0 0 1px rgba(0, 0, 0, .4);
}
.titlebar { display: flex; align-items: center; height: 15px; padding: 0 4px; background: #ecedf0; }
.lights { display: flex; gap: 4px; width: 40px; }
.light { width: 6px; height: 6px; border-radius: 50%; }
.red { background: #ec4b40; }
.amber { background: #f5b23a; }
.green { background: #3fae3c; }
.titlebar h1 { flex: 1; margin: 0 38px 0 0; text-align: center; font-size: 7px; font-weight: 700; color: #3a3a3a; }

.toolbar {
  display: flex;
  align-items: center;
  height: 22px;
  padding-bottom: 2px;
  background: linear-gradient(#ededed, #c6c6c6);
  border-top: 1px solid #f4f4f4;
}
.handle { flex: none; width: 5px; height: 15px; background: linear-gradient(#a6a6a6, #a6a6a6) 3px 1px / 5px 3px; background: repeating-linear-gradient(#a6a6a6 0 1px, transparent 1px 3px) 3px 0 / 1px 100% no-repeat; }
.sep { flex: none; width: 5px; height: 20px; background: linear-gradient(#ddd, #ddd) 2px 0 / 1px 100% no-repeat; }
.space { flex: none; width: 174px; }
.tool { flex: none; display: flex; align-items: center; justify-content: center; width: 23px; height: 18px; }
.tool.menu { width: 27px; justify-content: flex-start; padding-left: 5px; }
.icon { width: 16px; height: 16px; }
.chev { width: 5px; height: 4px; margin-top: 6px; }
.dim { opacity: .8; }
.faded .icon, .faded .chev { opacity: .68; }
.combo {
  flex: none; display: flex; align-items: center; width: 92px; height: 11px; margin: 0 4px; padding: 0 1px 0 5px;
  border-radius: 3px; background: #fff; box-shadow: 0 0 1px rgba(0, 0, 0, .4);
}
.combo-icon { width: 7px; height: 7px; }
.combo select { flex: 1; min-width: 0; padding-left: 2px; appearance: none; }
.combo-arrows { width: 8px; height: 8px; border-radius: 2px; background: #2f7cf6; }

.middle { flex: 1; min-height: 0; display: flex; }
.dock { flex: none; display: flex; flex-direction: column; width: 186px; border-right: 1px solid #aaa; }
.tabs { display: flex; justify-content: center; height: 10px; background: #ececec; }
.tab { display: flex; align-items: center; justify-content: center; height: 10px; background: #fff; border-radius: 2px 0 0 2px; }
.tab.active { background: #2f7df8; color: #fff; border-radius: 0 2px 2px 0; }
.model { width: 30px; }
.tasks { width: 50px; padding-right: 8px; gap: 3px; }
.tasks svg { width: 8px; height: 8px; }
.dock-title, .report-title { display: flex; align-items: center; gap: 4px; height: 10px; padding: 0 1px; border-bottom: 1px solid #c4c4c4; background: #ececec; }
.dock-title span, .report-title span { flex: 1; text-align: center; }
.dock-title { padding-right: 4px; }
.dock-title button, .report-title button { width: 8px; height: 8px; background: #dedede; }
.dock-title button svg, .report-title button svg { width: 8px; height: 8px; fill: none; stroke: #666; stroke-width: .7; }
.report-title .close svg { stroke: #222; }
.panel { flex: 1; display: flex; flex-direction: column; padding: 11px 13px 16px 18px; background: #d8dde6; border-left: 1px solid #c0c4cb; border-bottom: 1px solid #aaa; }
.dialog-buttons { display: flex; gap: 8px; padding-left: 36px; }
.push { width: 34px; height: 10px; border-radius: 2px; background: #fff; box-shadow: 0 0 1px rgba(0, 0, 0, .35); }
.push.primary { background: #2f7df8; color: #fff; }
h2 { display: flex; align-items: center; gap: 1px; margin: 12px 0 0 -10px; font-size: 6px; line-height: 10px; font-weight: 700; color: #7380a8; }
h2 svg { width: 6px; height: 6px; }
fieldset { position: relative; min-width: 0; margin: 0; padding: 0; border: 1px solid #c3c8d0; border-radius: 2px; }
legend { height: 6px; padding: 0 2px; line-height: 6px; }
.plane-row { display: flex; align-items: center; gap: 8px; margin-top: 13px; }
.planes { width: 122px; height: 43px; padding-left: 6px; }
.planes label { display: flex; align-items: center; gap: 3px; height: 10px; }
.planes legend + label { margin-top: 2px; }
.plane-icon { width: 24px; height: 24px; }
input[type="radio"], input[type="checkbox"] { flex: none; appearance: none; width: 7px; height: 7px; background: #fff; box-shadow: 0 0 1px rgba(0, 0, 0, .3); }
input[type="radio"] { border-radius: 50%; }
input[type="radio"]:checked { border: 2px solid #2273f5; }
input[type="checkbox"] { border-radius: 1px; }
input[type="checkbox"]:checked { background: #2273f5; position: relative; }
input[type="checkbox"]:checked::after { content: ""; position: absolute; left: 2px; top: 1px; width: 3px; height: 4px; border: solid #fff; border-width: 0 1px 1px 0; transform: rotate(40deg); }
.check { display: flex; align-items: center; gap: 2px; height: 10px; }
.reverse { margin-top: 6px; margin-bottom: 4px; }
.field { display: flex; align-items: center; height: 10px; margin-bottom: 6px; }
.field label { flex: none; width: 66px; }
.field input[type="text"] { flex: 1; min-width: 0; height: 10px; padding: 0 1px; font-size: 7px; background: #fff; box-shadow: 0 0 1px rgba(0, 0, 0, .35); }
.spin { flex: none; width: 6px; height: 10px; margin-left: 1px; border-radius: 3px; background: #fff; box-shadow: 0 0 1px rgba(0, 0, 0, .4); }
.spin svg { width: 6px; height: 10px; fill: none; stroke: #222; stroke-width: .9; }
.transparency { margin: 2px 0 13px; }
.transparency label { width: 50px; }
.transparency input[type="range"] { flex: 1; min-width: 0; height: 9px; margin-right: 8px; appearance: none; background: linear-gradient(#a9adb5, #a9adb5) 0 4px / 100% 1px no-repeat; }
input[type="range"]::-webkit-slider-thumb { appearance: none; width: 9px; height: 9px; border-radius: 50%; background: #fff; box-shadow: 0 0 1px rgba(0, 0, 0, .7); }
.field input.amount { flex: none; width: 14px; }
.size { height: 93px; padding: 0 7px 0 6px; }
.size .field label { width: 72px; }
.size legend + .field { margin-top: 4px; }
.size .field:nth-of-type(2) { margin-bottom: 4px; }
.calibration { display: flex; gap: 7px; height: 28px; margin-top: 9px; padding: 4px 6px 0; }
.calibration .push { flex: 1; }

.work { flex: 1; min-width: 0; display: flex; flex-direction: column; }
.view { position: relative; flex: 1; display: flex; align-items: center; justify-content: center; background: linear-gradient(#333366, #9494a8); }
.drawing { position: relative; width: 316px; height: 88px; background: #fff; }
.drawing svg { width: 100%; height: 100%; }
.dim-text { font-size: 4px; fill: #999; text-anchor: middle; }
.measured { position: absolute; left: 137px; top: 12px; width: 47px; height: 11px; padding: 0 1px; border: 1px solid #6fa5f5; background: #fff; font-size: 7px; box-shadow: 0 0 1px #6fa5f5; }
.navcube { position: absolute; right: 0; top: 0; width: 70px; height: 71px; }
.navcube text { font-size: 7px; fill: #7d7ca6; text-anchor: middle; }
.axis { position: absolute; right: 0; bottom: 12px; width: 22px; height: 22px; overflow: visible; }
.axis text { font-size: 5px; fill: #111; }
.doc-tabs { border-bottom: 1px solid #d4d4d4; }
.start { width: 36px; gap: 3px; }
.doc { width: 103px; gap: 6px; padding-right: 18px; }
.doc-tabs svg { width: 6px; height: 6px; }
.doc-tabs .doc-icon { width: 6px; height: 8px; margin-right: -3px; }

.report { display: flex; flex-direction: column; height: 90px; }
.report-title { height: 11px; padding-left: 6px; border-top: 1px solid #c4c4c4; }
.report-body { flex: 1; background: #fff; border: 1px solid #aaa; border-top: 0; }
.status { display: flex; align-items: center; height: 20px; padding: 0 18px 0 1px; background: linear-gradient(#e6e6e6, #bdbdbd); }
.message { flex: 1; }
.nav-style { display: flex; align-items: center; gap: 3px; margin-right: 28px; }
.nav-style svg { width: 8px; height: 8px; }

.callout { position: absolute; pointer-events: none; }
.callout path { fill: #e1e1e1; stroke: #d63c1a; stroke-width: 2; }
.callout text { font: 15px "Liberation Sans", Arial, sans-serif; fill: #111; text-anchor: middle; }
.finish { left: 140px; top: 60px; width: 232px; height: 78px; }
.callout.measure { left: 310px; top: 140px; width: 180px; height: 102px; }
.apply { left: 100px; top: 398px; width: 184px; height: 76px; }
</style>
